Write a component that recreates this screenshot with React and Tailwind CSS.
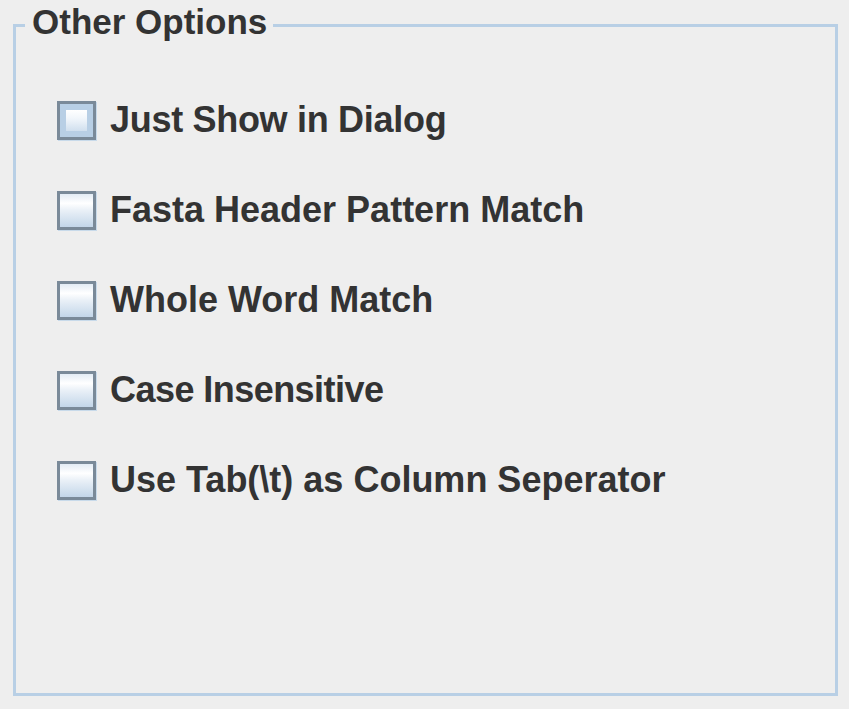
import React from "react";

const options = [
  { label: "Just Show in Dialog", focused: true, track: "tracking-[-0.3px]" },
  { label: "Fasta Header Pattern Match", track: "" },
  { label: "Whole Word Match", track: "" },
  { label: "Case Insensitive", track: "tracking-[-0.55px]" },
  { label: "Use Tab(\\t) as Column Seperator", track: "" },
];

function Box({ focused }) {
  return (
    <div className="w-[39px] h-[39px] shrink-0 border-[3px] border-[#7a8a99] shadow-[1px_1px_0_#c8daea] bg-[linear-gradient(to_bottom,#e3ecf5_0%,#ffffff_28%,#e9f0f7_50%,#c3d6e9_100%)] flex items-center justify-center">
      {focused ? (
        <div className="w-full h-full border-[6px] border-[#b8cfe5] bg-[linear-gradient(to_bottom,#ffffff_0%,#f1f6fb_40%,#d0dfee_100%)]" />
      ) : null}
    </div>
  );
}

export default function App() {
  return (
    <div
      className="w-[849px] h-[709px] bg-[#eeeeee] overflow-hidden pt-[2px]"
      style={{ fontFamily: '"Liberation Sans", Arial, sans-serif' }}
    >
      <fieldset className="ml-[13px] w-[825px] h-[694px] border-[3px] border-[#b8cfe5] p-0 m-0 min-w-0">
        <legend className="ml-[9px] pl-[7px] pr-[6px] pb-[7px] text-[35px] leading-[40px] font-bold text-[#333333]">
          Other Options
        </legend>
        <div className="flex flex-col gap-[51px] pt-[52px] pl-[41px]">
          {options.map((o) => (
            <div key={o.label} className="flex items-start gap-[14px] h-[39px]">
              <Box focused={o.focused} />
              <span className={`text-[36px] leading-[38px] font-bold text-[#333333] whitespace-nowrap ${o.track}`}>
                {o.label}
              </span>
            </div>
          ))}
        </div>
      </fieldset>
    </div>
  );
}
